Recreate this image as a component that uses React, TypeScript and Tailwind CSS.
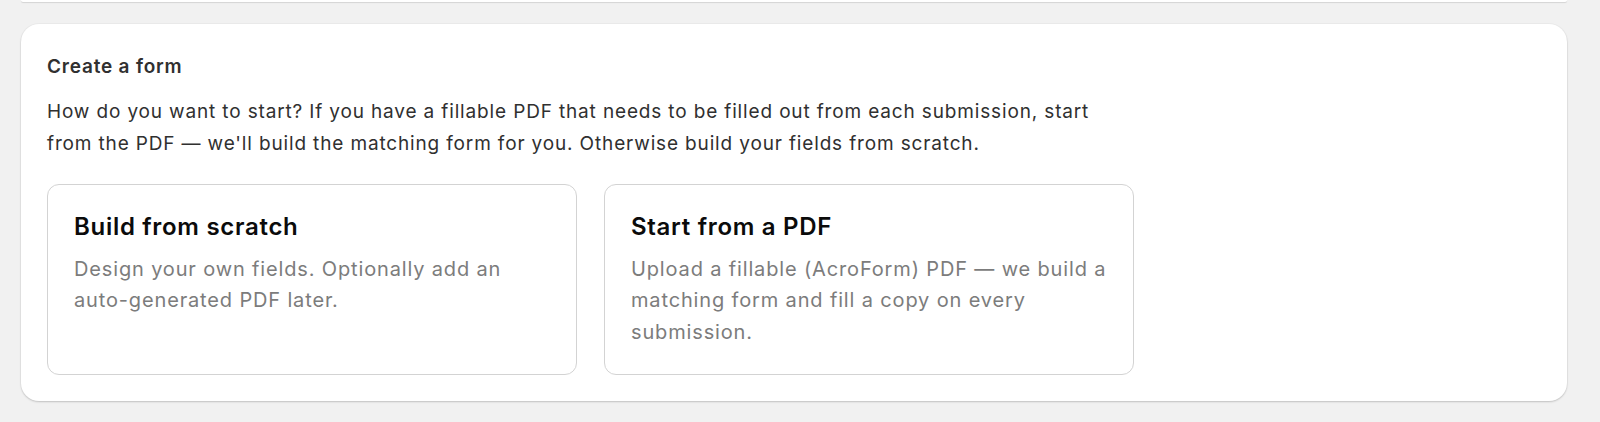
import React from "react";

interface OptionCardProps {
  title: string;
  description: string;
}

const OptionCard: React.FC<OptionCardProps> = ({ title, description }) => {
  return (
    <button className="text-left w-[530px] h-[191px] rounded-[12px] border border-[#d3d3d3] bg-white pl-[26px] pr-[18px] pt-[26px] flex flex-col items-start">
      <h3 className="text-[24px] leading-[32px] font-semibold text-[#0b0b0b] tracking-[0.7px]">
        {title}
      </h3>
      <p className="mt-[11px] text-[20px] leading-[31.6px] text-[#7c7c7c] tracking-[0.85px]">
        {description}
      </p>
    </button>
  );
};

export default function App() {
  return (
    <div
      className="w-[1600px] h-[422px] bg-[#f1f1f1] overflow-hidden"
      style={{ fontFamily: "Inter, 'Noto Sans', sans-serif" }}
    >
      {/* bottom edge of the previous card */}
      <div className="w-[1546px] ml-[21px] h-[2px] bg-white rounded-b-[18px] shadow-[0_1px_1px_rgba(0,0,0,0.12)]" />

      <div className="w-[1546px] ml-[21px] mt-[21.5px] h-[377px] bg-white rounded-[18px] shadow-[0_1px_2px_rgba(0,0,0,0.18),0_0_0_1px_rgba(0,0,0,0.025)] px-[26px] pt-[30px]">
        <h2 className="text-[19px] leading-[26px] font-semibold text-[#303030] tracking-[0.8px]">
          Create a form
        </h2>
        <p className="mt-[16px] w-[1062px] text-[19px] leading-[32px] text-[#303030] tracking-[0.85px]">
          How do you want to start? If you have a fillable PDF that needs to be filled out from each
          submission, start from the PDF — we'll build the matching form for you. Otherwise build your
          fields from scratch.
        </p>
        <div className="mt-[24px] flex gap-[27px]">
          <OptionCard
            title="Build from scratch"
            description="Design your own fields. Optionally add an auto-generated PDF later."
          />
          <OptionCard
            title="Start from a PDF"
            description="Upload a fillable (AcroForm) PDF — we build a matching form and fill a copy on every submission."
          />
        </div>
      </div>
    </div>
  );
}
